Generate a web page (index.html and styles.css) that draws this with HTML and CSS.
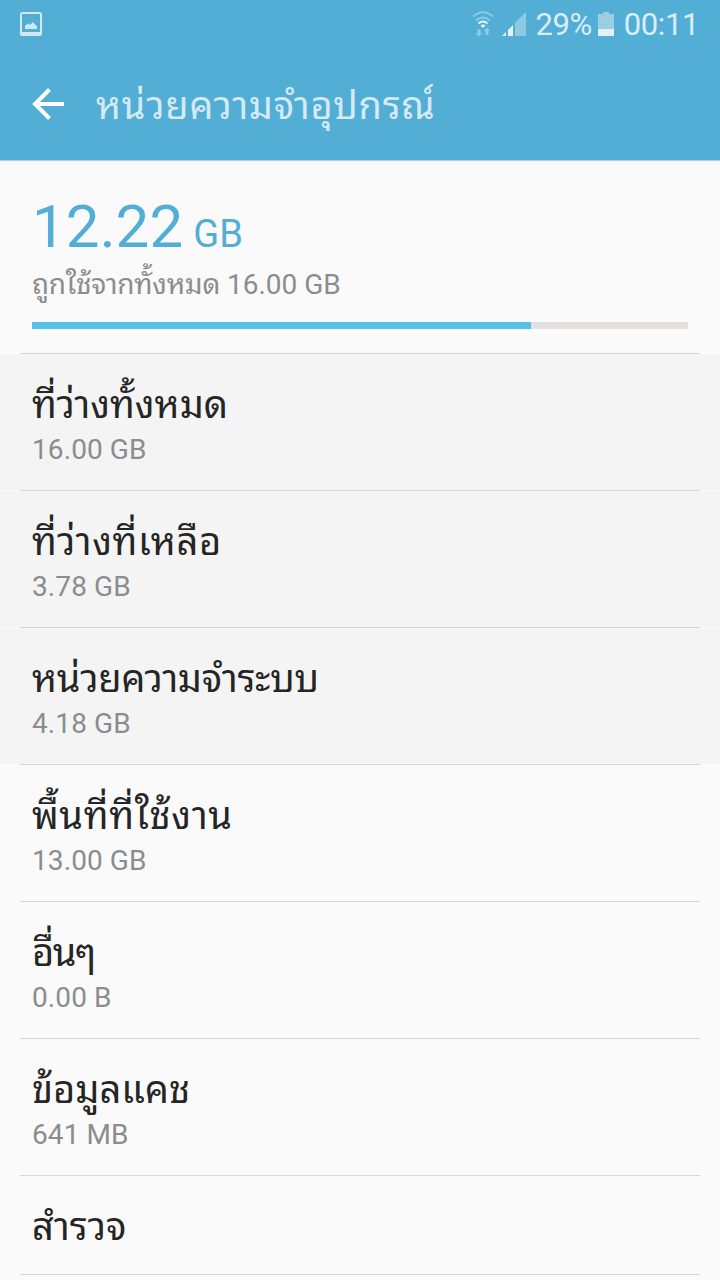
FILE: index.html
```html
<!DOCTYPE html>
<html lang="th">
<head>
    <meta charset="UTF-8">
    <meta name="viewport" content="width=device-width, initial-scale=1.0">
    <title>หน่วยความจำอุปกรณ์</title>
    <link rel="stylesheet" href="styles.css">
</head>
<body>
    <header class="header">
        <div class="status">
            <svg class="picture" width="22" height="24" viewBox="0 0 22 24">
                <rect x="1" y="1" width="20" height="22" rx="1.5" fill="none" stroke="#d0e9f4" stroke-width="2"/>
                <path d="M2 20h18v3H2z" fill="#d0e9f4"/>
                <path d="M5 17v-3l3-2.500 2 1.500 3-3 2 2.500 2 1.500v3z" fill="#d0e9f4"/>
            </svg>
            <svg class="wifi" width="22" height="26" viewBox="0 0 22 26">
                <g fill="none" stroke="#8cc9e2" stroke-width="2">
                    <path d="M1 5.500q10-8.500 20 0"/>
                    <path d="M4 9.500q7-6 14 0"/>
                    <path d="M6.500 12.500q4.500-4 9 0" stroke="#e2f2f8"/>
                </g>
                <path d="M8.500 14.500q2.500-2 5 0L11 17z" fill="#e2f2f8"/>
                <path d="M5.500 18h3v4h2L7 25.500 3.500 22h2zM13.500 24h3v-4h2L15 16.500 11.500 20h2z" fill="#8cc9e2"/>
            </svg>
            <svg class="signal" width="24" height="24" viewBox="0 0 24 24">
                <path d="M0 24l4-4v4zM6 24v-6l5-5v11z" fill="#e2f2f8"/>
                <path d="M13 24V11L24 0v24z" fill="#8cc9e2"/>
            </svg>
            <span class="percent">29%</span>
            <svg class="battery" width="16" height="24" viewBox="0 0 16 24">
                <path d="M0 2h5V0h6v2h5v15H0z" fill="#98cfe5"/>
                <path d="M0 17h16v7H0z" fill="#e2f2f8"/>
            </svg>
            <span class="clock">00:11</span>
        </div>
        <div class="bar">
            <svg class="back" width="32" height="32" viewBox="0 0 32 32">
                <path d="M32 16H3M17.500 1.500L3 16l14.500 14.500" fill="none" stroke="#fff" stroke-width="4"/>
            </svg>
            <h1 class="title">หน่วยความจำอุปกรณ์</h1>
        </div>
    </header>

    <section class="summary">
        <p class="used">12.22<span class="unit">GB</span></p>
        <p class="total"><span class="thai">ถูกใช้จากทั้งหมด</span> 16.00 GB</p>
        <div class="progress"><div class="fill"></div></div>
    </section>

    <ul class="list">
        <li class="row gray"><h2 class="label">ที่ว่างทั้งหมด</h2><p class="size">16.00 GB</p></li>
        <li class="row gray"><h2 class="label wide">ที่ว่างที่เหลือ</h2><p class="size">3.78 GB</p></li>
        <li class="row gray"><h2 class="label tight">หน่วยความจำระบบ</h2><p class="size">4.18 GB</p></li>
        <li class="row"><h2 class="label wide">พื้นที่ที่ใช้งาน</h2><p class="size">13.00 GB</p></li>
        <li class="row"><h2 class="label tighter">อื่นๆ</h2><p class="size">0.00 B</p></li>
        <li class="row"><h2 class="label">ข้อมูลแคช</h2><p class="size">641 MB</p></li>
        <li class="row short"><h2 class="label">สำรวจ</h2></li>
    </ul>
</body>
</html>
```

FILE: styles.css
```css
*{margin:0; padding: 0; box-sizing: border-box;}
li{list-style: none;}
body{background-color: #FAFAFA; font-family: Roboto, "Noto Sans Thai Looped", "Noto Looped Thai", "Droid Sans Thai", Waree, Loma, Umpush, Garuda, "Noto Sans Thai", sans-serif; height: 1280px; overflow: hidden;}
svg{display: block; flex: none;}

/* header */
.header{height: 160px; background-color: #53AED5; box-shadow: 0 1px 1px rgba(0,0,0,0.2);}
.status{display: flex; height: 48px; padding: 0 21px 0 20px; color: #D9EDF6; font-size: 31px; line-height: 50px; letter-spacing: -0.4px;}
.picture{margin-top: 12px;}
.wifi{margin: 11px 0 0 auto;}
.signal{margin: 12px 9px 0 8px;}
.battery{margin: 12px 10px 0 6px;}
.bar{display: flex; height: 112px; padding-left: 32px;}
.back{margin-top: 40px;}
.title{margin-left: 32px; line-height: 116px; font-size: 38px; letter-spacing: 0.7px; font-weight: 400; color: #D4EAF4; white-space: nowrap;}

/* summary */
.summary{height: 193px; padding: 32px 32px 0;}
.used{height: 70px; line-height: 70px; font-size: 60px; letter-spacing: 0.1px; color: #53AED5; white-space: nowrap;}
.unit{margin-left: 10px; font-size: 38px;}
.total{height: 40px; margin-top: 3px; line-height: 40px; font-size: 28px; color: #8A8D8F; white-space: nowrap;}
.thai{letter-spacing: -0.25px;}
.progress{height: 7px; margin-top: 17px; background-color: #E2E1DF;}
.fill{width: 76.1%; height: 7px; background-color: #56C0E5;}

/* list */
.row{height: 137px; padding: 26px 32px 0; background: linear-gradient(#D6D6D6,#D6D6D6) center top / 680px 1px no-repeat;}
.gray{background: linear-gradient(#D6D6D6,#D6D6D6) center top / 680px 1px no-repeat, linear-gradient(#F4F4F4,#F4F4F4) 0 1px no-repeat;}
.short{height: 100px; background: linear-gradient(#D6D6D6,#D6D6D6) center top / 680px 1px no-repeat, linear-gradient(#D6D6D6,#D6D6D6) center bottom / 680px 1px no-repeat;}
.label{height: 53px; line-height: 53px; font-size: 38px; font-weight: 400; color: #252525; white-space: nowrap;}
.wide{letter-spacing: 0.65px;}
.tight{letter-spacing: -0.3px;}
.tighter{letter-spacing: -1.5px;}
.size{line-height: 36px; font-size: 28px; letter-spacing: 0.1px; color: #8A8D8F;}
```
